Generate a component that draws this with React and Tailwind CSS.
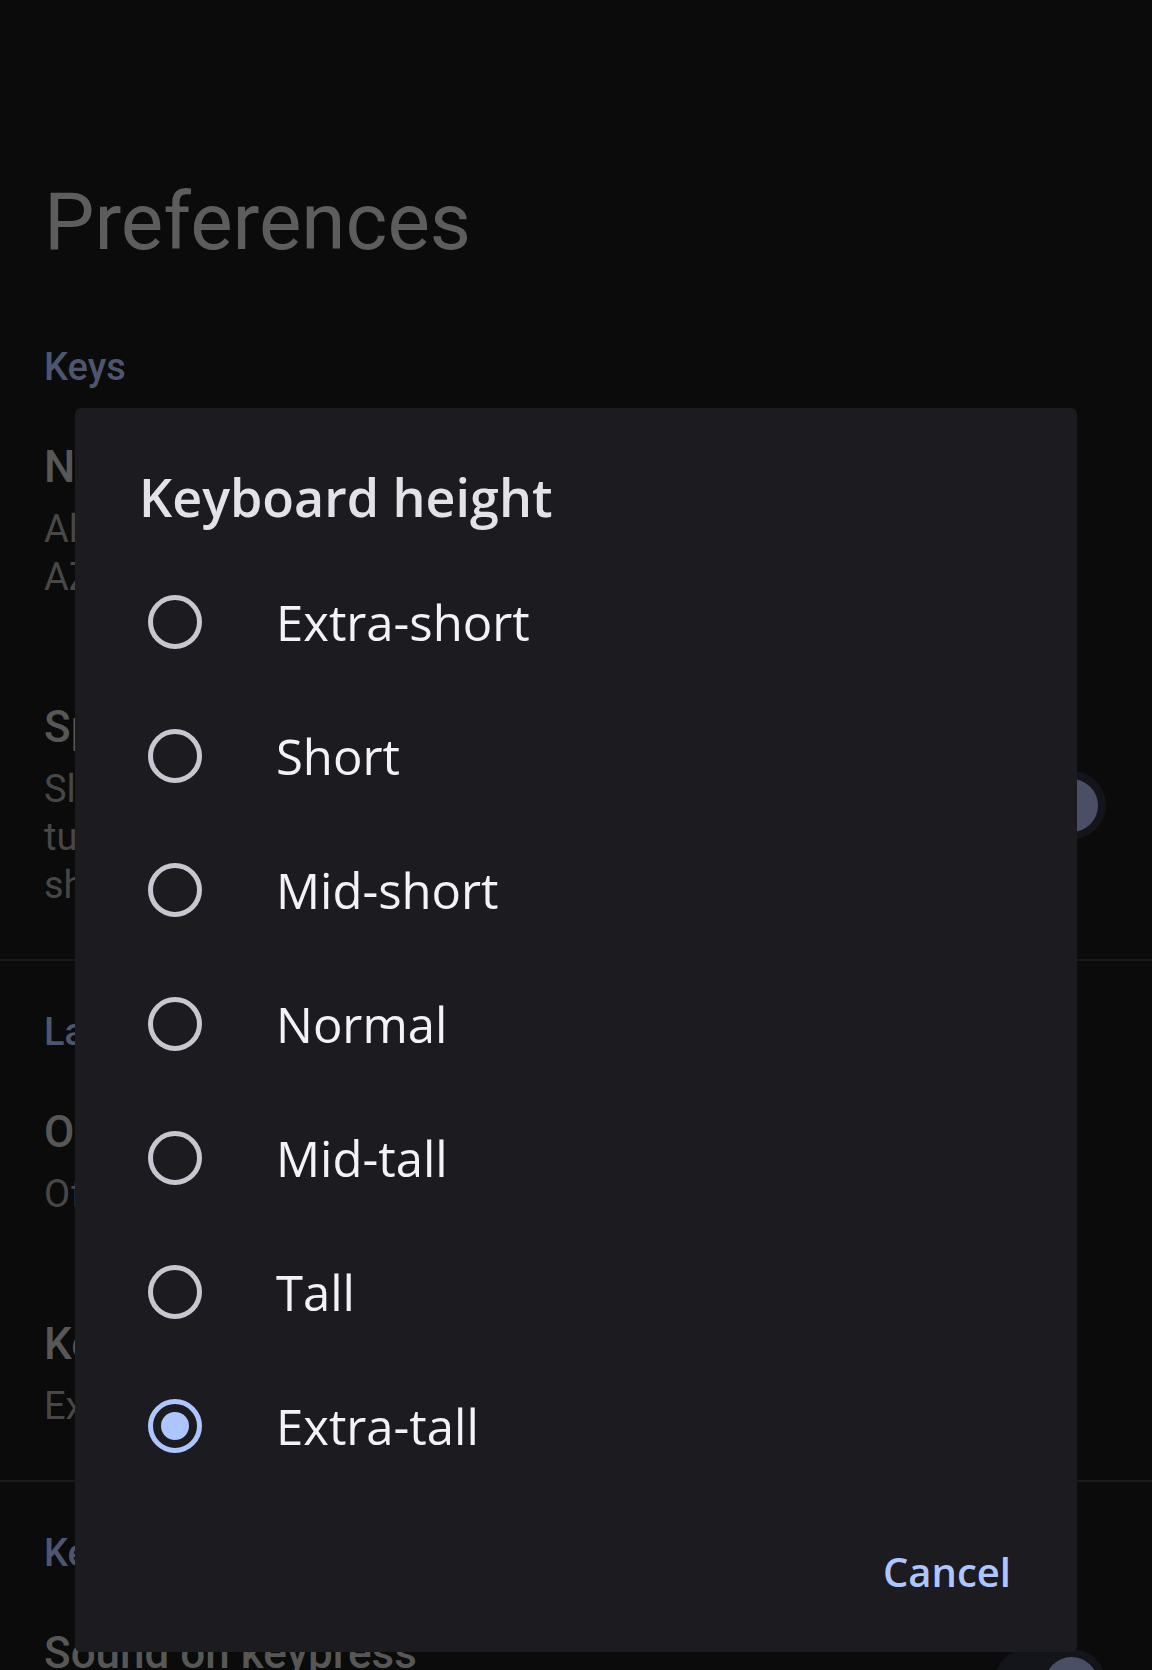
import React, { useState } from 'react';

const options = ['Extra-short', 'Short', 'Mid-short', 'Normal', 'Mid-tall', 'Tall', 'Extra-tall'];

const Radio = ({ checked }) => (
  <span
    className={`flex h-[54px] w-[54px] shrink-0 items-center justify-center rounded-full border-[5px] ${
      checked ? 'border-[#aec6ff]' : 'border-[#c8c6cf]'
    }`}
  >
    {checked && <span className="h-[28px] w-[28px] rounded-full bg-[#aec6ff]" />}
  </span>
);

const Toggle = () => (
  <div className="flex h-[68px] w-[112px] shrink-0 items-center justify-end rounded-full bg-[#14151b] pr-[8px]">
    <span className="h-[53px] w-[53px] rounded-full bg-[#4a4f66]" />
  </div>
);

const SectionHeader = ({ children, className = 'mt-[47px]' }) => (
  <div className={`${className} text-[38px] font-medium leading-[48px] text-[#4e566f]`}>{children}</div>
);

const Item = ({ title, lines, toggle }) => (
  <div className="flex items-center py-[50px]">
    <div className="flex-1">
      <div className="text-[44px] font-medium leading-[52px] text-[#575757]">{title}</div>
      <div className="mt-[12px] text-[38px] leading-[48px] text-[#474747]">
        {lines.map((l) => (
          <div key={l}>{l}</div>
        ))}
      </div>
    </div>
    {toggle && <Toggle />}
  </div>
);

export default function App() {
  const [selected, setSelected] = useState('Extra-tall');

  return (
    <div className="relative h-[1670px] w-[1152px] overflow-hidden bg-[#0b0b0b] font-['Roboto','Liberation_Sans',sans-serif]">
      {/* settings screen behind the dialog */}
      <div className="pl-[44px] pr-[46px]">
        <h1 className="pt-[174px] text-[80px] leading-[96px] text-[#5d5d5d]">Preferences</h1>
        <SectionHeader className="mt-[73px]">Keys</SectionHeader>
        <Item title="Number row" lines={['Always show on', 'AZERTY layouts']} />
        <Item
          title="Space bar gestures"
          lines={['Slide on the space bar to', 'turn on cursor mode and', 'show more options']}
          toggle
        />
      </div>
      <div className="h-[2px] bg-[#1a1a1a]" />

      <div className="pl-[44px] pr-[46px]">
        <SectionHeader>Layout</SectionHeader>
        <Item title="One-handed mode" lines={['Off']} />
        <Item title="Keyboard height" lines={['Extra-tall']} />
      </div>
      <div className="h-[2px] bg-[#1a1a1a]" />

      <div className="pl-[44px] pr-[46px]">
        <SectionHeader>Keypress</SectionHeader>
        <Item title="Sound on keypress" lines={['Off']} toggle />
      </div>

      {/* dialog */}
      <div className="absolute left-[75px] top-[408px] flex h-[1244px] w-[1002px] flex-col rounded-[6px] bg-[#1c1b20] pt-[57px] font-['Open_Sans','Noto_Sans',sans-serif]">
        <h2 className="pl-[64px] text-[52px] font-semibold leading-[64px] text-[#e4e2e9]">Keyboard height</h2>
        <div className="mt-[26px]">
          {options.map((o) => (
            <button
              key={o}
              onClick={() => setSelected(o)}
              className="flex h-[134px] w-full items-center pl-[73px] text-left"
            >
              <Radio checked={selected === o} />
              <span className="ml-[74px] text-[49px] leading-[60px] text-[#f3f2f5]">{o}</span>
            </button>
          ))}
        </div>
        <div className="mt-[55px] flex justify-end pr-[66px]">
          <button className="text-[40px] font-semibold leading-[48px] text-[#aec6ff]">Cancel</button>
        </div>
      </div>
    </div>
  );
}
